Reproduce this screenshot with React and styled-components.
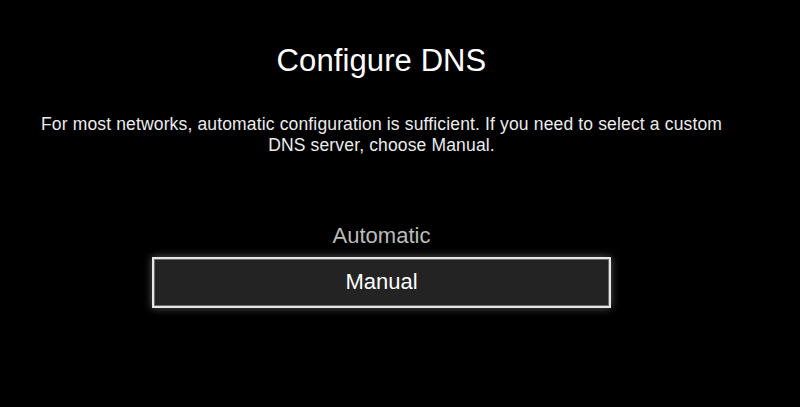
import React from "react"
import styled, {createGlobalStyle} from "styled-components"

const GlobalStyle = createGlobalStyle`
	html, body {
		margin: 0;
		padding: 0;
		background: #000;
	}
	body {
		font-family: "Liberation Sans", Arial, sans-serif;
	}
`

const options = [
	{label: "Automatic", focused: false},
	{label: "Manual", focused: true},
]

export default function App() {
	return (
		<>
			<GlobalStyle />
			<Screen>
				<Title>Configure DNS</Title>
				<Description>
					For most networks, automatic configuration is sufficient. If you need to select a custom
					<br />
					DNS server, choose Manual.
				</Description>
				<OptionList>
					{options.map(option => (
						<Option key={option.label} $focused={option.focused}>
							{option.label}
						</Option>
					))}
				</OptionList>
			</Screen>
		</>
	)
}

const Screen = styled.main`
	width: 800px;
	height: 407px;
	box-sizing: border-box;
	padding: 43px 37px 0 0;
	background: #000;
	color: #fff;
	display: flex;
	flex-direction: column;
	align-items: center;
	overflow: hidden;
`

const Title = styled.h1`
	margin: 0;
	font-size: 31px;
	line-height: 36px;
	font-weight: 400;
	color: #fff;
	letter-spacing: 0.1px;
`

const Description = styled.p`
	margin: 35px 0 0;
	width: 740px;
	font-size: 17.5px;
	line-height: 21px;
	letter-spacing: 0.15px;
	text-align: center;
	color: #ececec;
`

const OptionList = styled.div`
	margin-top: 67px;
	display: flex;
	flex-direction: column;
	align-items: center;
	gap: 8px;
`

const Option = styled.div`
	box-sizing: border-box;
	width: 459px;
	font-size: 22px;
	text-align: center;
	color: ${p => (p.$focused ? "#fff" : "#bbb")};
	line-height: ${p => (p.$focused ? "45px" : "26px")};
	height: ${p => (p.$focused ? "51px" : "26px")};
	background: ${p => (p.$focused ? "#232323" : "transparent")};
	border: ${p => (p.$focused ? "2px solid #e6e6e6" : "none")};
	box-shadow: ${p =>
		p.$focused
			? "inset 0 0 0 1px #6a6a6a, 0 0 8px rgba(255, 255, 255, 0.35)"
			: "none"};
	padding-bottom: ${p => (p.$focused ? "2px" : "0")};
`
